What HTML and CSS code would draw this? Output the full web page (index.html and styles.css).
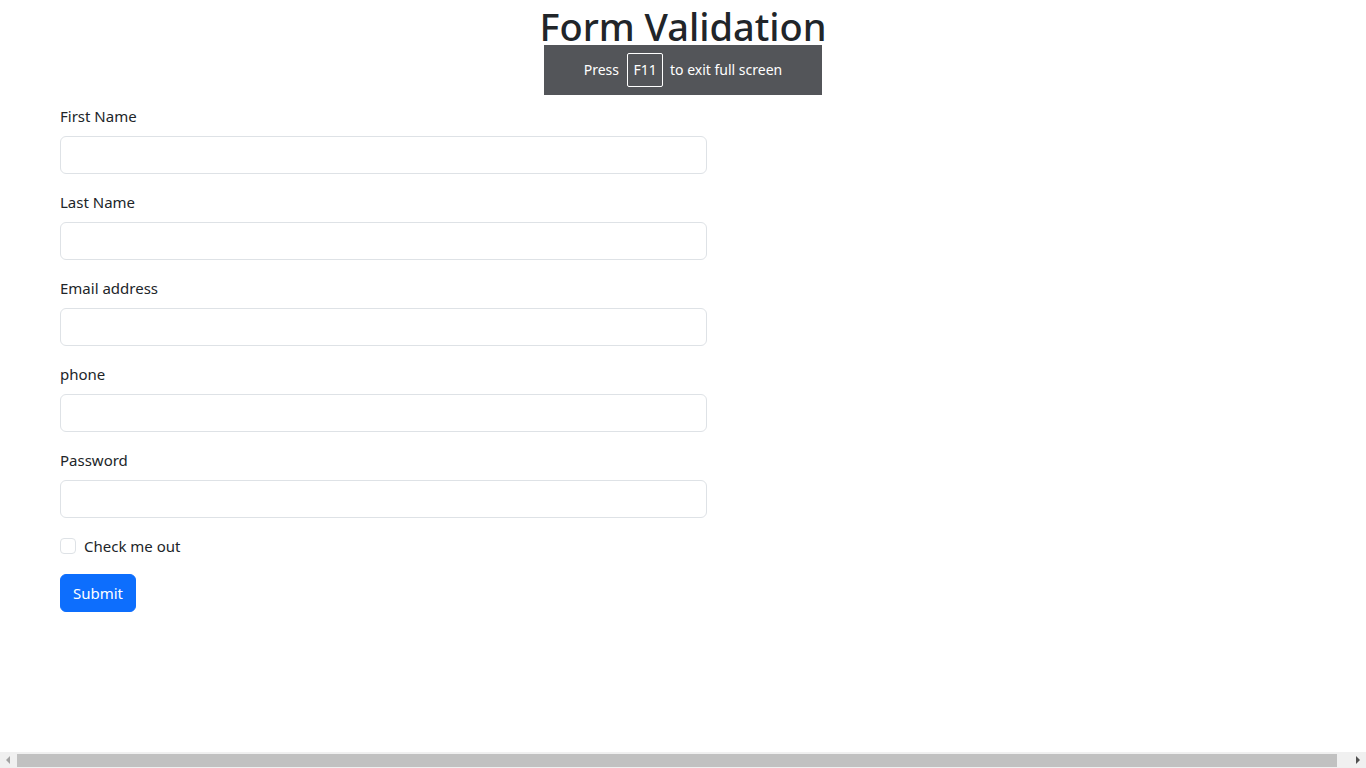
FILE: index.html
```html
<!DOCTYPE html>
<html lang="en">
<head>
<meta charset="utf-8">
<title>Form Validation</title>
<link rel="stylesheet" href="styles.css">
</head>
<body>
<h1 class="title">Form Validation</h1>
<div class="fs-toast">Press <span class="key">F11</span> to exit full screen</div>
<form class="form">
  <div class="field">
    <label class="label" for="fn">First Name</label>
    <input class="input" id="fn" type="text">
  </div>
  <div class="field">
    <label class="label" for="ln">Last Name</label>
    <input class="input" id="ln" type="text">
  </div>
  <div class="field">
    <label class="label" for="em">Email address</label>
    <input class="input" id="em" type="email">
  </div>
  <div class="field">
    <label class="label" for="ph">phone</label>
    <input class="input" id="ph" type="text">
  </div>
  <div class="field">
    <label class="label" for="pw">Password</label>
    <input class="input" id="pw" type="password">
  </div>
  <div class="check">
    <span class="box"></span>
    <span class="check-label">Check me out</span>
  </div>
  <button class="btn" type="button">Submit</button>
</form>
<div class="hscroll">
  <span class="arrow arrow-left"></span>
  <span class="thumb"></span>
  <span class="arrow arrow-right"></span>
</div>
</body>
</html>
```
FILE: styles.css
```css
* { box-sizing: border-box; }
html, body { margin: 0; padding: 0; }
body {
  font-family: "Noto Sans", "Open Sans", sans-serif;
  font-size: 15px;
  color: #212529;
  background: #fff;
  height: 768px;
  overflow: hidden;
}
.title {
  margin: 0;
  text-align: center;
  font-size: 38px;
  font-weight: 500;
  line-height: 52px;
}
.fs-toast {
  position: absolute;
  left: 544px;
  top: 45px;
  width: 278px;
  height: 50px;
  padding-bottom: 1px;
  background: #535559;
  color: #fff;
  font-size: 14px;
  display: flex;
  align-items: center;
  justify-content: center;
}
.key {
  display: inline-flex;
  align-items: center;
  justify-content: center;
  width: 36px;
  height: 34px;
  border: 1px solid #fff;
  border-radius: 2px;
  margin: 0 7px 0 8px;
}
.form {
  padding: 52px 0 0 60px;
  width: 707px;
}
.field { margin-bottom: 16px; }
.label {
  display: block;
  line-height: 24px;
  margin-bottom: 8px;
}
.input {
  display: block;
  width: 100%;
  height: 38px;
  border: 1px solid #dee2e6;
  border-radius: 6px;
  background: #fff;
  font: inherit;
  padding: 6px 12px;
}
.check {
  display: flex;
  align-items: center;
  height: 24px;
  margin-bottom: 16px;
}
.box {
  width: 16px;
  height: 16px;
  border: 1px solid #dee2e6;
  border-radius: 4px;
  margin-right: 8px;
}
.btn {
  height: 38px;
  width: 76px;
  background: #0d6efd;
  color: #fff;
  border: 1px solid #0d6efd;
  border-radius: 6px;
  font: inherit;
  padding: 0;
}
.hscroll {
  position: fixed;
  left: 0;
  right: 0;
  bottom: 0;
  height: 16px;
  background: #f0f0f0;
  display: flex;
  align-items: center;
}
.thumb {
  height: 13px;
  width: 1320px;
  background: #c1c1c1;
  margin-left: 7px;
}
.arrow {
  width: 0;
  height: 0;
  border-top: 4px solid transparent;
  border-bottom: 4px solid transparent;
}
.arrow-left { border-right: 4px solid #a3a3a3; margin-left: 6px; }
.arrow-right { border-left: 4px solid #505050; margin-left: auto; margin-right: 6px; }
```
